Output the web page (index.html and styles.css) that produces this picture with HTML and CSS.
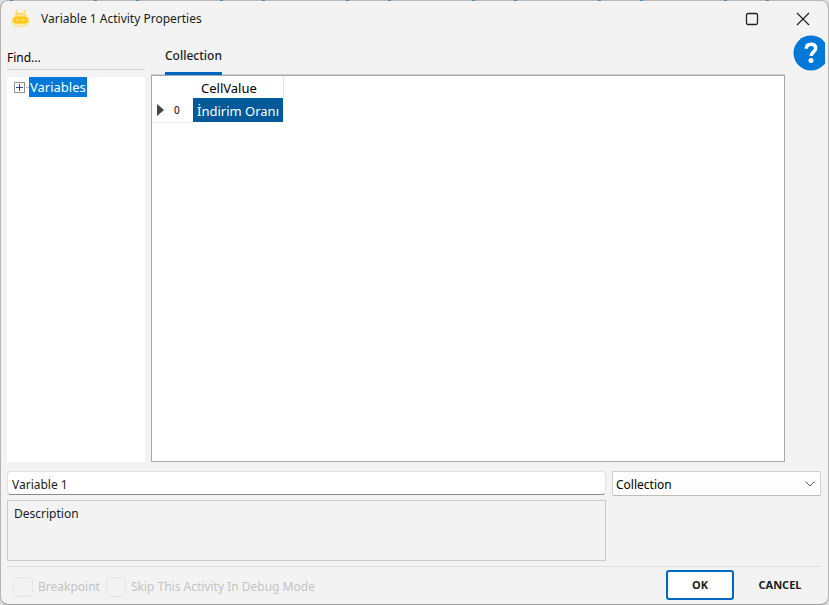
FILE: index.html
```html
<!DOCTYPE html>
<html lang="en">
<head>
<meta charset="utf-8">
<title>Variable 1 Activity Properties</title>
<link rel="stylesheet" href="styles.css">
</head>
<body>
<div class="window">
  <header class="titlebar">
    <svg class="logo" viewBox="0 0 22 20" aria-hidden="true">
      <path d="M6.500 1v3.500M14.500 1v3.500" stroke="#ffd95a" stroke-width="1.500" fill="none"/>
      <path d="M4 8C5 5 7.500 4 10.500 4S16 5 17 8l3 2.500v3L17 15.500H4l-3-2v-3z" fill="#ffe796"/>
      <path d="M5 7C6 5 8 4.500 10.500 4.500S15 5 16 7" stroke="#ffd95a" stroke-width="1.500" fill="none"/>
      <rect x="3" y="7.500" width="15" height="7" rx="3.500" fill="#ffc61a"/>
      <ellipse cx="7.500" cy="11" rx="2" ry="1.200" fill="#ffdc60"/>
      <ellipse cx="13.500" cy="11" rx="2" ry="1.200" fill="#ffdc60"/>
      <path d="M3 16c4 1.500 11 1.500 15 0" stroke="#ffe28a" stroke-width="1.500" fill="none"/>
    </svg>
    <h1 class="title">Variable 1 Activity Properties</h1>
    <button class="caption-button" type="button" aria-label="Maximize">
      <svg width="16" height="16" viewBox="0 0 16 16"><rect x="2.500" y="2.500" width="11" height="11" rx="1.500" fill="none" stroke="#222" stroke-width="1.300"/></svg>
    </button>
    <button class="caption-button" type="button" aria-label="Close">
      <svg width="16" height="16" viewBox="0 0 16 16"><path d="M2 2l12 12M14 2L2 14" fill="none" stroke="#222" stroke-width="1.200"/></svg>
    </button>
  </header>

  <main class="main">
    <aside class="sidebar">
      <input class="find" type="text" value="Find..." aria-label="Find">
      <div class="tree">
        <button class="expander" type="button" aria-label="Expand Variables">
          <svg width="16" height="11" viewBox="0 0 16 11"><rect x=".5" y=".5" width="10" height="10" fill="#fff" stroke="#919191"/><path d="M2 5.500h7M5.500 2v7" stroke="#344a84"/><path d="M12 5.500h1M14 5.500h1" stroke="#a0a0a0"/></svg>
        </button>
        <span class="tree-label">Variables</span>
      </div>
    </aside>
    <section class="content">
      <nav class="tabs"><button class="tab" type="button">Collection</button></nav>
      <div class="grid-box">
        <table class="grid">
          <thead><tr><th class="row-head"></th><th class="column-head">CellValue</th></tr></thead>
          <tbody><tr>
            <th class="row-head"><div class="row-mark"><svg width="7" height="12" viewBox="0 0 7 12"><path d="M0 0l7 6-7 6z" fill="#444"/></svg><span>0</span></div></th>
            <td class="selected">İndirim Oranı</td>
          </tr></tbody>
        </table>
      </div>
    </section>
    <button class="help" type="button" aria-label="Help">
      <svg width="32" height="36" viewBox="0 0 32 36"><circle cx="18" cy="18" r="17.500" fill="#0078d7"/><path d="M13.300 13.700C13.300 10.700 15.200 9.200 18 9.200c2.900 0 4.700 1.500 4.700 3.900 0 3.800-4.500 3.700-4.500 7.800" fill="none" stroke="#fff" stroke-width="3.500"/><circle cx="18" cy="25.500" r="2.500" fill="#fff"/></svg>
    </button>
  </main>

  <form class="details">
    <input class="name" type="text" value="Variable 1" aria-label="Name">
    <div class="select-wrap">
      <select class="type" aria-label="Type"><option>Collection</option></select>
      <svg class="chevron" width="10" height="6" viewBox="0 0 10 6"><path d="M.5.5L5 5 9.500.5" fill="none" stroke="#555"/></svg>
    </div>
    <textarea class="description" aria-label="Description">Description</textarea>
  </form>

  <footer class="footer">
    <label class="check"><input type="checkbox" disabled>Breakpoint</label>
    <label class="check"><input type="checkbox" disabled>Skip This Activity In Debug Mode</label>
    <div class="actions">
      <button class="button primary" type="button">OK</button>
      <button class="button" type="button">CANCEL</button>
    </div>
  </footer>
</div>
</body>
</html>
```

FILE: styles.css
```css
* { box-sizing: border-box; }

body {
  margin: 0;
  background: #dedede;
  color: #1b1b1b;
  font: 13px/18px "Noto Sans", "Open Sans", sans-serif;
}

button, input, select, textarea {
  margin: 0;
  padding: 0;
  border: 0;
  border-radius: 0;
  background: none;
  color: inherit;
  font: inherit;
  outline: 0;
}

svg { display: block; }

.window {
  display: flex;
  flex-direction: column;
  height: 100vh;
  border: 1px solid #b5b5b5;
  border-top-color: transparent;
  border-bottom-color: #9c9c9c;
  border-radius: 8px;
  background:
    linear-gradient(#f3f3f3, #f3f3f3) padding-box,
    repeating-linear-gradient(90deg, #b9b9b9 0 10px, #4a88b8 10px 13px, #b9b9b9 13px 94px, #4a88b8 94px 97px, #b9b9b9 97px 126px) border-box;
  overflow: hidden;
}

/* Title bar */
.titlebar {
  display: flex;
  align-items: center;
  flex: none;
  height: 34px;
  padding-top: 2px;
  padding-left: 9px;
}

.logo { width: 22px; height: 20px; }

.title {
  flex: 1;
  margin: 0 0 0 9px;
  font-size: 12px;
  font-weight: 400;
}

.caption-button {
  display: grid;
  place-items: center;
  width: 52px;
  height: 32px;
}

.titlebar .caption-button:last-child { width: 50px; }

/* Tree and grid */
.main {
  display: flex;
  flex: 1;
  gap: 6px;
  min-height: 0;
  padding-left: 6px;
}

.sidebar {
  display: flex;
  flex-direction: column;
  width: 138px;
  padding-top: 10px;
}

.find {
  width: 100%;
  height: 25px;
  margin-bottom: 7px;
  border-bottom: 1px solid #d4d4d4;
  color: #000;
  font-size: 12px;
}

.tree {
  display: flex;
  align-items: flex-start;
  flex: 1;
  padding-left: 7px;
  background: #fff;
}

.expander { padding: 5px 0; margin-right: -1px; }

.tree-label {
  padding: 1px;
  background: #0078d7;
  color: #fff;
}

.content {
  display: flex;
  flex-direction: column;
  flex: 1;
  min-width: 0;
}

.tabs {
  flex: none;
  height: 40px;
  padding: 9px 0 0 14px;
  border-bottom: 1px solid #d0d0d0;
}

.tab {
  height: 31px;
  padding-bottom: 4px;
  border-bottom: 3px solid #0067c0;
  font-size: 12px;
  font-weight: 500;
}

.grid-box {
  flex: 1;
  border: 1px solid #a9a9ad;
  background: #fff;
}

.grid {
  border-collapse: collapse;
  color: #000;
}

.grid th, .grid td {
  padding: 0;
  font-weight: 400;
  text-align: left;
}

.grid .row-head { width: 41px; border-bottom: 1px solid #ececec; }
.grid thead .row-head { border: 0; }

.grid .column-head {
  height: 22px;
  padding: 2px 0 0 8px;
  border-right: 1px solid #e3e3e3;
}

.grid .selected {
  height: 24px;
  padding: 2px 4px 0;
  background: #005a9a;
  color: #fff;
}

.row-mark {
  display: flex;
  align-items: center;
  gap: 10px;
  padding-left: 5px;
  font-size: 10px;
}

.help {
  align-self: flex-start;
  width: 32px;
  margin-right: 3px;
  margin-left: 2px;
}

/* Name, type and description */
.details {
  display: grid;
  flex: none;
  grid-template-columns: 1fr 209px;
  gap: 4px 6px;
  margin: 9px 7px 0 6px;
  padding-bottom: 5px;
  border-bottom: 1px solid #dedede;
  font-size: 12px;
}

.name {
  width: 100%;
  height: 24px;
  padding: 2px 4px 0;
  border: 1px solid #e2e2e2;
  border-bottom-color: #8c8c8c;
  border-radius: 4px;
  background: #fff;
}

.select-wrap {
  display: grid;
  align-items: center;
}

.type {
  grid-area: 1 / 1;
  width: 100%;
  height: 25px;
  padding: 2px 3px 0;
  border: 1px solid #d0d0d0;
  border-bottom-color: #bcbcbc;
  border-radius: 2px;
  background: #fdfdfd;
  color: #000;
  appearance: none;
}

.chevron {
  grid-area: 1 / 1;
  justify-self: end;
  margin-right: 6px;
  pointer-events: none;
}

.description {
  width: 100%;
  height: 61px;
  padding: 4px 6px;
  border: 1px solid #cacaca;
  resize: none;
}

/* Footer */
.footer {
  display: flex;
  align-items: center;
  flex: none;
  gap: 6px;
  height: 37px;
  padding: 0 14px 2px 12px;
}

.check {
  display: flex;
  align-items: center;
  gap: 5px;
  padding-top: 4px;
  color: #c3c3c3;
  font-size: 12px;
}

.check input {
  width: 20px;
  height: 20px;
  border: 1px solid #e6e6e6;
  border-radius: 4px;
  appearance: none;
}

.actions {
  display: flex;
  gap: 12px;
  margin-left: auto;
}

.button {
  width: 68px;
  height: 30px;
  border-radius: 3px;
  font-size: 11px;
  font-weight: 700;
}

.primary {
  border: 2px solid #0067c0;
  background: #fff;
}
```
